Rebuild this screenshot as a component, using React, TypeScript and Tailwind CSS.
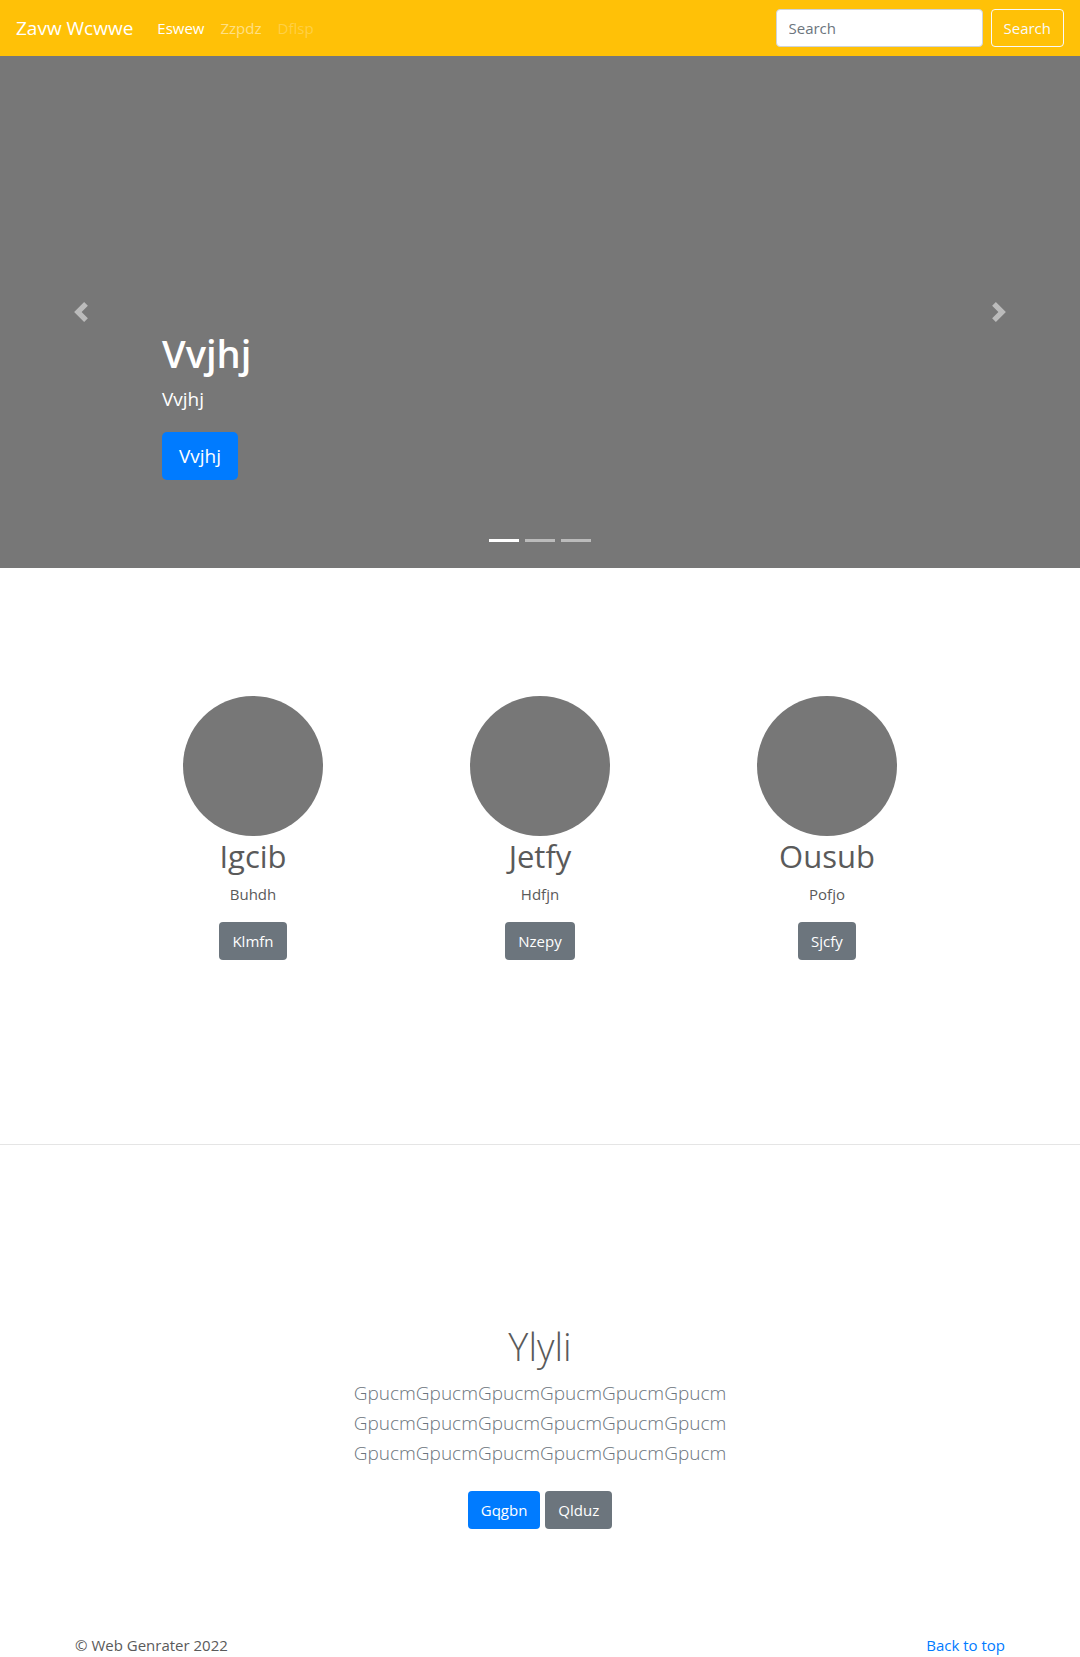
import React from "react";

const features = [
  { title: "Igcib", text: "Buhdh", action: "Klmfn" },
  { title: "Jetfy", text: "Hdfjn", action: "Nzepy" },
  { title: "Ousub", text: "Pofjo", action: "Sjcfy" },
];

const leadLines = [
  "GpucmGpucmGpucmGpucmGpucmGpucm",
  "GpucmGpucmGpucmGpucmGpucmGpucm",
  "GpucmGpucmGpucmGpucmGpucmGpucm",
];

function Navbar() {
  return (
    <nav className="flex h-14 items-center bg-[#ffc107] px-4 text-white">
      <a href="#" className="mr-6 text-[19px] leading-[30px]">
        Zavw Wcwwe
      </a>
      <ul className="flex grow gap-4">
        <li>
          <a href="#" aria-current="page">
            Eswew
          </a>
        </li>
        <li>
          <a href="#" className="text-white/50">
            Zzpdz
          </a>
        </li>
        <li>
          <a href="#" aria-disabled="true" className="text-white/25">
            Dflsp
          </a>
        </li>
      </ul>
      <form className="flex gap-2" onSubmit={(e) => e.preventDefault()}>
        <input
          type="search"
          aria-label="Search"
          placeholder="Search"
          className="h-[38px] w-[207px] rounded border border-[#ced4da] bg-white px-3 text-[#495057] placeholder:text-[#6c757d]"
        />
        <button
          type="submit"
          className="h-[38px] rounded border border-[#f8f9fa] px-3 text-[#f8f9fa]"
        >
          Search
        </button>
      </form>
    </nav>
  );
}

function Hero() {
  return (
    <section className="relative flex h-[512px] items-stretch bg-[#777] text-white">
      <button
        type="button"
        aria-label="Previous"
        className="flex w-[15%] items-center justify-center opacity-50"
      >
        <svg viewBox="0 0 8 8" className="size-5" fill="#fff">
          <path d="M5.25 0l-4 4 4 4 1.5-1.5-2.5-2.5 2.5-2.5-1.5-1.5z" />
        </svg>
      </button>
      <div className="flex grow flex-col items-start justify-end pb-[88px]">
        <h1 className="mb-2 text-[38px] leading-[48px] font-semibold">Vvjhj</h1>
        <p className="mb-[19px] text-[19px] leading-7">Vvjhj</p>
        <a
          href="#"
          className="flex h-12 items-center rounded-[5px] bg-[#007bff] px-[17px] text-[19px]"
        >
          Vvjhj
        </a>
      </div>
      <button
        type="button"
        aria-label="Next"
        className="flex w-[15%] items-center justify-center opacity-50"
      >
        <svg viewBox="0 0 8 8" className="size-5" fill="#fff">
          <path d="M2.75 0l-1.5 1.5 2.5 2.5-2.5 2.5 1.5 1.5 4-4-4-4z" />
        </svg>
      </button>
      <div className="absolute inset-x-0 bottom-[26px] flex justify-center gap-1.5">
        <button type="button" aria-label="Slide 1" className="h-[3px] w-[30px] bg-white" />
        <button type="button" aria-label="Slide 2" className="h-[3px] w-[30px] bg-white/50" />
        <button type="button" aria-label="Slide 3" className="h-[3px] w-[30px] bg-white/50" />
      </div>
    </section>
  );
}

function Features() {
  return (
    <section className="mx-auto grid max-w-[861px] grid-cols-3 pt-32 pb-[184px]">
      {features.map((f) => (
        <div key={f.title} className="flex flex-col items-center">
          <div className="size-[140px] rounded-full bg-[#777]" />
          <h2 className="mb-1.5 text-[31px] leading-10">{f.title}</h2>
          <p className="mb-4">{f.text}</p>
          <a
            href="#"
            className="flex h-[38px] items-center rounded bg-[#6c757d] px-[13px] text-white"
          >
            {f.action}
          </a>
        </div>
      ))}
    </section>
  );
}

function CallToAction() {
  return (
    <section className="flex flex-col items-center pt-[177px] pb-[104px] text-center">
      <h2 className="mb-2 text-[38px] leading-[48px] font-light">Ylyli</h2>
      <p className="mb-[23px] text-[19px] leading-[30px] font-light text-[#6c757d]">
        {leadLines.map((line, i) => (
          <span key={i} className="block">
            {line}
          </span>
        ))}
      </p>
      <div className="flex gap-[5px] text-white">
        <a href="#" className="flex h-[38px] items-center rounded bg-[#007bff] px-[13px]">
          Gqgbn
        </a>
        <a href="#" className="flex h-[38px] items-center rounded bg-[#6c757d] px-[13px]">
          Qlduz
        </a>
      </div>
    </section>
  );
}

export default function App() {
  return (
    <div className="bg-white font-['Open_Sans','Noto_Sans',sans-serif] text-[15px] leading-6 text-[#5a5a5a]">
      <Navbar />
      <main>
        <Hero />
        <Features />
        <hr className="border-black/10" />
        <CallToAction />
      </main>
      <footer className="mx-auto flex max-w-[960px] justify-between px-[15px]">
        <p>© Web Genrater 2022</p>
        <a href="#" className="text-[#007bff]">
          Back to top
        </a>
      </footer>
    </div>
  );
}
